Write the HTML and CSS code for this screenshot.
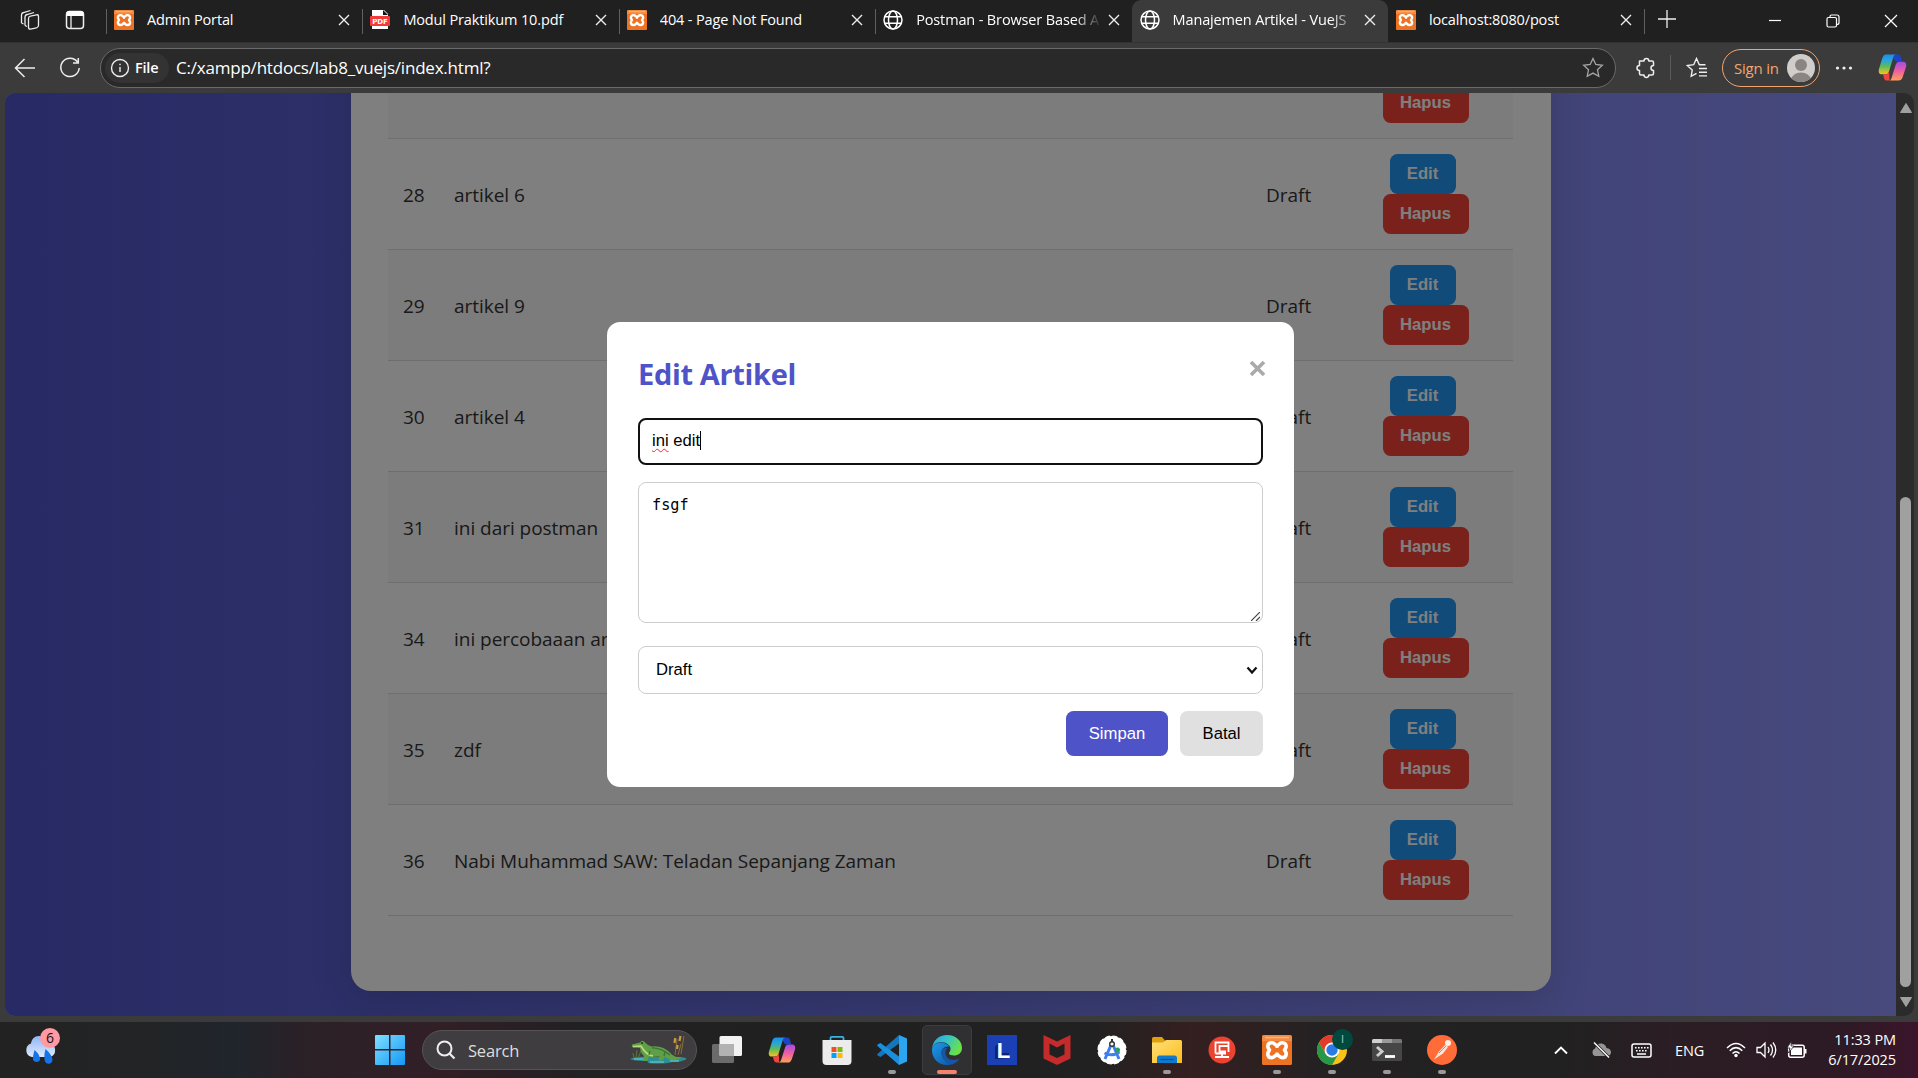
FILE: index.html
```html
<!DOCTYPE html>
<html lang="id">
<head>
<meta charset="utf-8">
<title>Manajemen Artikel - VueJS</title>
<link rel="stylesheet" href="styles.css">
</head>
<body>
<svg class="defs" aria-hidden="true">
  <defs>
    <linearGradient id="cpA" x1="0" y1="0" x2="0" y2="1"><stop offset="0" stop-color="#1b8fe8"/><stop offset=".3" stop-color="#28a5dc"/><stop offset=".6" stop-color="#5cbb5a"/><stop offset="1" stop-color="#f8c51c"/></linearGradient>
    <linearGradient id="cpB" x1="0" y1="0" x2="0" y2="1"><stop offset="0" stop-color="#a04be8"/><stop offset=".5" stop-color="#ee5fa0"/><stop offset="1" stop-color="#ffa058"/></linearGradient>
    <linearGradient id="xg" x1="0" y1="0" x2="0" y2="1"><stop offset="0" stop-color="#f08a3c"/><stop offset=".2" stop-color="#f58a45"/><stop offset=".22" stop-color="#ee7020"/><stop offset="1" stop-color="#ec7424"/></linearGradient>
    <linearGradient id="win" x1="0" y1="0" x2="1" y2="1"><stop offset="0" stop-color="#7fe0ff"/><stop offset="1" stop-color="#1398f5"/></linearGradient>
    <linearGradient id="edA" x1="0" y1="0" x2="1" y2=".4"><stop offset="0" stop-color="#2d9fe0"/><stop offset=".5" stop-color="#34c4c8"/><stop offset="1" stop-color="#6be04a"/></linearGradient>
    <linearGradient id="edB" x1="0" y1="0" x2="1" y2="1"><stop offset="0" stop-color="#1c9ae6"/><stop offset="1" stop-color="#0c4fa0"/></linearGradient>
    <linearGradient id="cl" x1="0" y1="0" x2="0" y2="1"><stop offset="0" stop-color="#8fb6f5"/><stop offset="1" stop-color="#dfeafc"/></linearGradient>
    <linearGradient id="fo" x1="0" y1="0" x2="1" y2="1"><stop offset="0" stop-color="#ffe07a"/><stop offset="1" stop-color="#fbbc1a"/></linearGradient>
  </defs>
  <symbol id="i-xampp" viewBox="0 0 30 30">
    <rect width="30" height="30" rx="1.500" fill="url(#xg)"/><path d="M3 2.500h24" stroke="#f8b68a" stroke-width="1.500"/>
    <path d="M10 7.700c-3 0-4.200 1.600-4.200 3.600 0 1.900 1.200 2.700 1.700 3.700-.5 1-1.700 2-1.700 3.900 0 2 1.300 3.700 4.200 3.700 2.800 0 3-2.700 5-2.700s2.200 2.700 5 2.700c2.900 0 4.200-1.700 4.200-3.700 0-1.900-1.200-2.900-1.700-3.900.5-1 1.700-1.800 1.700-3.700 0-2-1.200-3.600-4.200-3.600-2.800 0-3 2.700-5 2.700s-2.200-2.700-5-2.700z" fill="none" stroke="#fff" stroke-width="3.600" stroke-linejoin="round"/>
    <path d="M15 9.500v3.500M15 17.500v3.500" stroke="#fff" stroke-width="3"/>
  </symbol>
  <symbol id="i-globe" viewBox="0 0 20 20"><g fill="none" stroke="#fff" stroke-width="1.500"><circle cx="10" cy="10" r="9"/><ellipse cx="10" cy="10" rx="4.500" ry="9"/><path d="M1.800 6.800h16.400M1.800 13.200h16.400"/></g></symbol>
  <symbol id="i-x" viewBox="0 0 12 12"><path d="M1 1l10 10M11 1L1 11" stroke="#eee" stroke-width="1.400"/></symbol>
  <symbol id="i-copilot" viewBox="0 0 30 28">
    <path d="M17 .5h3.500c2 0 2.600 1 3.200 3L25 8h-6.500L15 3z" fill="#1b45c8"/>
    <path d="M8.500.5H19c-2 0-2.700 1-3.300 3l-4.200 14c-.8 2.600-1.800 3.500-4.300 3.500H4c-3 0-3.800-2.500-3-5.500L4.200 5C5.200 2 6.300.5 8.500.5z" fill="url(#cpA)"/>
    <path d="M12 27.500H9.500c-2 0-2.800-1-3.400-3l-1-3.500h2.200c2.500 0 3.400-1 4.200-3.500z" fill="#f0443e"/>
    <path d="M21 27.500H10.500c2.300 0 3-1 3.600-3L18.400 11c.6-2 1.700-3 4-3H26c3 0 3.800 2.500 3 5.500l-3 9c-1 3.500-2.300 5-5 5z" fill="url(#cpB)"/>
  </symbol>
</svg>

<header class="tabstrip">
  <div class="strip-tools">
    <svg width="22" height="22" viewBox="0 0 22 22"><g fill="none" stroke="#eee" stroke-width="1.300"><rect x="9.500" y="6.500" width="10" height="13" rx="2" transform="skewY(-12) translate(0 3)"/><path d="M6 16.500V8q0-2 2-2.500l7-2M2.500 14V6q0-2 2-2.500l7-2M6 16.500l2 1M2.500 14l2 1"/></g></svg>
    <svg width="20" height="20" viewBox="0 0 20 20"><rect x="1.500" y="1.500" width="17" height="17" rx="3" fill="none" stroke="#eee" stroke-width="1.500"/><path d="M1.500 6V4q0-3 3-3h11q3 0 3 3v2z" fill="#fff"/><path d="M6 6v12" stroke="#eee" stroke-width="1.300"/></svg>
  </div>
  <div class="tab"><svg class="fav"><use href="#i-xampp"/></svg><span>Admin Portal</span><svg class="x"><use href="#i-x"/></svg></div>
  <div class="tab"><svg class="fav" viewBox="0 0 20 20"><path d="M2 0h12l4 4v15H2z" fill="#fff"/><path d="M13 0l5 5h-5z" fill="#111"/><rect y="6" width="20" height="10" rx="1" fill="#f23c3c"/><text x="10" y="13.800" text-anchor="middle" class="pdf">PDF</text></svg><span>Modul Praktikum 10.pdf</span><svg class="x"><use href="#i-x"/></svg></div>
  <div class="tab"><svg class="fav"><use href="#i-xampp"/></svg><span>404 - Page Not Found</span><svg class="x"><use href="#i-x"/></svg></div>
  <div class="tab"><svg class="fav"><use href="#i-globe"/></svg><span class="fade">Postman - Browser Based A</span><svg class="x"><use href="#i-x"/></svg></div>
  <div class="tab active"><svg class="fav"><use href="#i-globe"/></svg><span class="fade">Manajemen Artikel - VueJS</span><svg class="x"><use href="#i-x"/></svg></div>
  <div class="tab after"><svg class="fav"><use href="#i-xampp"/></svg><span>localhost:8080/post</span><svg class="x"><use href="#i-x"/></svg></div>
  <div class="newtab"><svg width="18" height="18" viewBox="0 0 18 18"><path d="M9 0v18M0 9h18" stroke="#eee" stroke-width="1.300"/></svg></div>
  <div class="winctl">
    <svg width="14" height="14" viewBox="0 0 14 14"><path d="M1 6.500h12" stroke="#fff" stroke-width="1.200"/></svg>
    <svg width="14" height="14" viewBox="0 0 14 14"><g fill="none" stroke="#fff" stroke-width="1.200"><rect x="1" y="3.500" width="9.500" height="9.500" rx="1.500"/><path d="M4 3V2.500Q4 1 5.500 1H11q2 0 2 2v5.500Q13 10.500 11 10.500"/></g></svg>
    <svg width="14" height="14" viewBox="0 0 14 14"><path d="M1 1l12 12M13 1L1 13" stroke="#fff" stroke-width="1.200"/></svg>
  </div>
</header>

<nav class="toolbar">
  <svg class="back" width="22" height="20" viewBox="0 0 22 20"><path d="M21 10H2M10.500 1L1.500 10l9 9" fill="none" stroke="#eee" stroke-width="1.500"/></svg>
  <svg class="reload" width="22" height="22" viewBox="0 0 22 22"><path d="M18.500 5A9.200 9.200 0 1 0 20.200 11M19.300 1v5h-5.300" fill="none" stroke="#eee" stroke-width="1.500"/></svg>
  <div class="address">
    <div class="file"><svg width="20" height="20" viewBox="0 0 20 20"><circle cx="10" cy="10" r="8.500" fill="none" stroke="#eee" stroke-width="1.400"/><path d="M10 9v5M10 5.800v1.500" stroke="#eee" stroke-width="1.400"/></svg><b>File</b></div>
    <span class="url">C:/xampp/htdocs/lab8_vuejs/index.html?</span>
    <svg class="star" width="22" height="22" viewBox="0 0 22 22"><path d="M11 1.500l2.800 6 6.500.8-4.800 4.500 1.300 6.500L11 16.100l-5.800 3.200 1.300-6.500L1.700 8.300l6.500-.8z" fill="none" stroke="#a5a5a5" stroke-width="1.300"/></svg>
  </div>
  <svg class="puzzle" width="22" height="22" viewBox="0 0 22 22"><path d="M5 4h4a2.400 2.400 0 0 1 4.800 0H17q1.500 0 1.500 1.500v3a2.500 2.500 0 1 0 0 5v3q0 1.500-1.500 1.500h-3.200a2.400 2.400 0 0 1-4.800 0H6q-1.500 0-1.500-1.500v-3a2.500 2.500 0 0 1 0-5V4z" fill="none" stroke="#eee" stroke-width="1.500" stroke-linejoin="round"/></svg>
  <i class="tsep"></i>
  <svg class="favs" width="22" height="22" viewBox="0 0 22 22"><path d="M10.500 16.300l-5.300 3 1-6.300-5-4.500 6.500-.8 2.800-6.200 2.800 6.200h6.200M13 11.500h8M13 15.200h8M13 18.900h8" fill="none" stroke="#eee" stroke-width="1.400"/></svg>
  <div class="signin"><span>Sign in</span><svg width="28" height="28" viewBox="0 0 28 28"><clipPath id="av"><circle cx="14" cy="14" r="14"/></clipPath><g clip-path="url(#av)"><rect width="28" height="28" fill="#d0cdca"/><circle cx="14" cy="11" r="6" fill="#8a8583"/><ellipse cx="14" cy="25" rx="9.500" ry="6.500" fill="#8a8583"/></g></svg></div>
  <svg class="dots" width="18" height="6" viewBox="0 0 18 6"><g fill="#eee"><circle cx="2.500" cy="3" r="1.600"/><circle cx="9" cy="3" r="1.600"/><circle cx="15.500" cy="3" r="1.600"/></g></svg>
  <svg class="cop" width="29" height="27"><use href="#i-copilot"/></svg>
</nav>

<main class="frame">
  <div class="page">
    <section class="card">
      <table class="articles">
        <colgroup><col class="c-id"><col><col class="c-st"><col class="c-act"></colgroup>
        <tr><td></td><td></td><td></td><td class="act"><button class="b edit">Edit</button><button class="b del">Hapus</button></td></tr>
        <tr><td>28</td><td>artikel 6</td><td>Draft</td><td class="act"><button class="b edit">Edit</button><button class="b del">Hapus</button></td></tr>
        <tr><td>29</td><td>artikel 9</td><td>Draft</td><td class="act"><button class="b edit">Edit</button><button class="b del">Hapus</button></td></tr>
        <tr><td>30</td><td>artikel 4</td><td>Draft</td><td class="act"><button class="b edit">Edit</button><button class="b del">Hapus</button></td></tr>
        <tr><td>31</td><td>ini dari postman</td><td>Draft</td><td class="act"><button class="b edit">Edit</button><button class="b del">Hapus</button></td></tr>
        <tr><td>34</td><td>ini percobaaan artikel</td><td>Draft</td><td class="act"><button class="b edit">Edit</button><button class="b del">Hapus</button></td></tr>
        <tr><td>35</td><td>zdf</td><td>Draft</td><td class="act"><button class="b edit">Edit</button><button class="b del">Hapus</button></td></tr>
        <tr><td>36</td><td>Nabi Muhammad SAW: Teladan Sepanjang Zaman</td><td>Draft</td><td class="act"><button class="b edit">Edit</button><button class="b del">Hapus</button></td></tr>
      </table>
    </section>
    <div class="overlay">
      <form class="modal">
        <div class="mhead"><h2>Edit Artikel</h2><svg width="17" height="17" viewBox="0 0 17 17"><path d="M2 2l13 13M15 2L2 15" stroke="#aaa" stroke-width="3.600"/></svg></div>
        <div class="field title"><span class="typo">ini</span>&nbsp;edit<i class="caret"></i></div>
        <div class="field body">fsgf<svg class="grip" width="9" height="9" viewBox="0 0 9 9"><path d="M0 9L9 0M5 9l4-4" stroke="#444" stroke-width="1.200"/></svg></div>
        <div class="field status">Draft<svg width="12" height="9" viewBox="0 0 12 9"><path d="M1.500 1.500L6 6.500l4.500-5" fill="none" stroke="#111" stroke-width="2.200"/></svg></div>
        <div class="btns"><button type="button" class="save">Simpan</button><button type="button" class="cancel">Batal</button></div>
      </form>
    </div>
  </div>
  <div class="scroll">
    <svg width="14" height="12" viewBox="0 0 14 12"><path d="M7 1.500L12.500 10.500h-11z" fill="#a0a0a0" stroke="#a0a0a0" stroke-linejoin="round"/></svg>
    <i class="thumb"></i>
    <svg width="14" height="12" viewBox="0 0 14 12"><path d="M7 10.500L12.500 1.500h-11z" fill="#a0a0a0" stroke="#a0a0a0" stroke-linejoin="round"/></svg>
  </div>
</main>

<footer class="taskbar">
  <div class="weather"><svg width="34" height="40" viewBox="0 0 34 40"><path d="M8 27a7 7 0 0 1-1-13.500C8 8 12 5 17 6.500c5 0 8 3 9 7A7 7 0 0 1 26 27z" fill="url(#cl)"/><path d="M10.500 20q6 5 5.500 10a4 4 0 0 1-7 0q-.5-3 1.500-10zM21.500 19q7 6 7 11.500a4 4 0 0 1-7.500 1q-1.500-5 .5-12.500z" fill="#1673ea"/></svg><b>6</b></div>
  <svg class="start" width="30" height="30" viewBox="0 0 30 30"><path d="M0 1q0-1 1-1h13v14H0zM15.500 0H29q1 0 1 1v13H15.500zM0 15.500h14V30H1q-1 0-1-1zM15.500 15.500H30V29q0 1-1 1H15.500z" fill="url(#win)"/></svg>
  <div class="search">
    <svg width="20" height="20" viewBox="0 0 20 20"><circle cx="8.500" cy="8.500" r="7" fill="none" stroke="#eee" stroke-width="2"/><path d="M13.500 13.500l5 5" stroke="#eee" stroke-width="2.200"/></svg>
    <span>Search</span>
    <svg class="croc" width="58" height="30" viewBox="0 0 58 30">
      <path d="M0 24q6-3 16-2h32q10 0 8 2.500-6 3-14 2.500-6 2-20 1.500-6-.5-4-2.500-14 0-18-2z" fill="#2b8f96"/><path d="M4 24h10M20 27h14M40 26h9" stroke="#72d0d6"/>
      <path d="M6 23L7 15M8 23l3-7M4 23l-1-5" stroke="#57713a" stroke-width="1.200"/>
      <path d="M45 20L47 4M51 19L54 1M48 20l3-11" stroke="#8a7038" stroke-width="1"/><path d="M44.500 8l.7-5M49.500 6L50.500 1M47 14l.6-4" stroke="#c79a45" stroke-width="2.200"/>
      <path d="M2 9.500l8-2q2-3 4.500-.5 3 3.500 7 4.500 6-1 12 1.500 5 2.500 9 7 4 3 9 2-4 4-11 3l-6-3-2 3.500h-4l1-4-11 .5-1 4h-4.500l1-5q-3-2-4-8l-7-.5q-2-.5-1-2z" fill="#5f9f48"/>
      <path d="M3 11.500l8-.5q5 9 12 10" stroke="#bcd87c" stroke-width="1.600" fill="none"/><path d="M22 13q8-.5 18 7M19 20l1-4M34 21l1-4" stroke="#3c7437" stroke-width="1.300" fill="none"/><circle cx="12" cy="8" r=".9" fill="#222"/>
    </svg>
  </div>
  <div class="apps">
    <div class="app"><svg viewBox="0 0 30 30"><rect x="0" y="9" width="22" height="19" rx="1.500" fill="#6b6b6b"/><rect x="7.500" y="1" width="22.500" height="20" rx="1.500" fill="#f2f2f2"/><path d="M7.500 9H22v12H7.500z" fill="#b2b2b2"/></svg></div>
    <div class="app"><svg viewBox="0 0 30 30"><use href="#i-copilot" x="1" y="2" width="28" height="26"/></svg></div>
    <div class="app"><svg viewBox="0 0 30 30"><path d="M8.500 7V3q0-1.200 1.200-1.200h10.600q1.200 0 1.200 1.200v4" fill="none" stroke="#35b4e4" stroke-width="1.800"/><path d="M.5 5h29v21q0 4-4 4h-21q-4 0-4-4z" fill="#ececec"/><path d="M9.500 12h5v5h-5z" fill="#f25022"/><path d="M15.500 12h5v5h-5z" fill="#7fba00"/><path d="M9.500 18h5v5h-5z" fill="#00a4ef"/><path d="M15.500 18h5v5h-5z" fill="#ffb900"/></svg></div>
    <div class="app run"><svg viewBox="0 0 30 30"><path d="M22 0l8 3.500v23L22 30z" fill="#2ba5f0"/><path d="M22 0v8.500L3.500 22 1 20.800q-1.500-1 0-2.200z" fill="#1178bd"/><path d="M22 30v-8.500L3.500 8 1 9.200q-1.500 1 0 2.200z" fill="#1b8fdb"/></svg></div>
    <div class="app run cur"><svg viewBox="0 0 30 30"><path d="M0 14C1 5 7 0 15 0c9 0 15 6 15 13 0 5-4 7.500-8 7.500-3 0-5-1-5-2.300 0-1 1.500-1.400 1.500-4.200C18.500 10 14 7 9 7 4 7 1 10 0 14z" fill="url(#edA)"/><path d="M0 14C1 10 4.500 7.500 9 7.500c3 0 7 2 8.500 4-5-.5-8 2.500-8 6.500 0 7 7 10 13 8.500q4-1.500 5-3C25 28 20 30 15 30 6 30-.5 23 0 14z" fill="url(#edB)"/><path d="M10 14c-2 7 2 13 8 15.500 5-1 8-3.500 9.500-6-6 3-14 1.500-14-6 0-2 .8-3.500 2-4.500-2 0-4 .2-5.500 1z" fill="#1556a5"/></svg></div>
    <div class="app"><svg viewBox="0 0 30 30"><path d="M0 0h30v30H0z" fill="#1b3fb4"/><path d="M8 24V12l5-6v12h9v5z" fill="#10246e"/><text x="16.500" y="22.500" text-anchor="middle" class="ell">L</text></svg></div>
    <div class="app"><svg viewBox="0 0 30 30"><path d="M1.500 0L15 6.500 28.500 0v23.500L15 30 1.500 23.500z" fill="#c62b2b"/><path d="M7.500 8.500L15 12.500l7.500-4V19.500L15 23l-7.500-3.500z" fill="#202020"/></svg></div>
    <div class="app"><svg viewBox="0 0 30 30"><circle cx="15" cy="15" r="14" fill="#fff" stroke="#fff" stroke-width="1.200" stroke-dasharray="5 2.330"/><path d="M8 24l6-14h2l6 14M7.500 18q7.500 4 15-1" fill="none" stroke="#3d7fee" stroke-width="3"/><circle cx="20.500" cy="15" r="2.500" fill="#2d9d5a"/><circle cx="15" cy="9" r="2.300" fill="#fff" stroke="#333" stroke-width="1.400"/><path d="M15 4v3" stroke="#333" stroke-width="2"/></svg></div>
    <div class="app run"><svg viewBox="0 0 30 30"><path d="M0 3.500Q0 2 1.500 2H10l3 3.500V9H0z" fill="#dfa010"/><path d="M0 7.500h11L14 5h14.500Q30 5 30 6.500V28H0z" fill="url(#fo)"/><path d="M5 28v-5q0-2.500 2.500-2.500h15Q25 20.500 25 23v5z" fill="#1079ce"/><path d="M8.500 24.500h13" stroke="#0a4f93" stroke-width="1.200"/></svg></div>
    <div class="app"><svg viewBox="0 0 30 30"><circle cx="15" cy="15" r="13.500" fill="#ea4330"/><path d="M8.500 18.500v-11h13v9.500M21 11h-8.500v5.500H19M8.500 18.500H19M15 18.500v3M8 22h14" fill="none" stroke="#fff" stroke-width="1.800"/></svg></div>
    <div class="app run"><svg><use href="#i-xampp"/></svg></div>
    <div class="app run"><svg viewBox="0 0 30 30"><circle cx="15" cy="15" r="15" fill="#fbc116"/><path d="M2 7.500A15 15 0 0 1 28 7.500H15L8.500 18.800z" fill="#e33b2e"/><path d="M2 7.500A15 15 0 0 0 15 30l6.500-11.300-13 0z" fill="#279847"/><circle cx="15" cy="15" r="7.500" fill="#fff"/><circle cx="15" cy="15" r="5.700" fill="#2a7ae8"/></svg><b class="prof">I</b></div>
    <div class="app run"><svg viewBox="0 0 30 30"><rect y="4" width="30" height="22" rx="1.500" fill="#464646"/><path d="M0 8V5.500Q0 4 1.500 4H10v4z" fill="#cfcfcf"/><path d="M10 4h10v4H10z" fill="#9b9b9b"/><path d="M20 4h8.500Q30 4 30 5.500V8H20z" fill="#777"/><path d="M5 12l5 4.500L5 21" fill="none" stroke="#ccc" stroke-width="3"/><path d="M13 21.500h10" stroke="#fff" stroke-width="2.800"/></svg></div>
    <div class="app run"><svg viewBox="0 0 30 30"><circle cx="15" cy="15" r="15" fill="#ff6c37"/><circle cx="21" cy="8" r="3" fill="#fdeee6"/><path d="M18.500 9.500l2.500 2.500-5 6.500-9 6 5-8z" fill="#fbe3d8"/><path d="M12 18l7-7" stroke="#e0683c" stroke-width=".8"/></svg></div>
  </div>
  <div class="tray">
    <svg class="chev" width="14" height="9" viewBox="0 0 14 9"><path d="M1 7.500l6-6 6 6" fill="none" stroke="#fff" stroke-width="1.900"/></svg>
    <svg class="cloud" width="20" height="16" viewBox="0 0 20 16"><path d="M4 14a4 4 0 0 1 0-7.500Q6 1 10.500 1.500q4 .5 5 4.500 4.500.5 4.500 4.500Q19.500 14 16 14z" fill="#969696"/><path d="M3 .5L18 15.500" stroke="#222" stroke-width="3"/><path d="M3 .5L18 15.500" stroke="#fff" stroke-width="1.400"/></svg>
    <svg class="kb" width="21" height="15" viewBox="0 0 21 15"><rect x="1" y="1" width="19" height="13" rx="2" fill="none" stroke="#fff" stroke-width="1.500"/><path d="M4 4.700h14M5 7.700h12" stroke="#fff" stroke-width="1.500" stroke-dasharray="1.600 1.400"/><path d="M6 11h9" stroke="#fff" stroke-width="1.500"/></svg>
    <span class="eng">ENG</span>
    <svg class="wifi" width="20" height="16" viewBox="0 0 20 16"><path d="M1 6q9-9 18 0M3.700 8.800q6.300-6.300 12.600 0M6.500 11.500q3.500-3.500 7 0" fill="none" stroke="#fff" stroke-width="1.500"/><circle cx="10" cy="13.500" r="1.700" fill="#fff"/></svg>
    <svg class="vol" width="21" height="18" viewBox="0 0 21 18"><path d="M1 6.500h3.500L9 2v14l-4.500-4.500H1zM12 6q2 3 0 6M14.500 3.500q4 5.500 0 11M17 1.500q5.500 7.500 0 15" fill="none" stroke="#fff" stroke-width="1.300"/></svg>
    <svg class="bat" width="20" height="18" viewBox="0 0 20 18"><rect x="1.700" y="4.200" width="15.500" height="12" rx="2" fill="none" stroke="#fff" stroke-width="1.500"/><path d="M4 6.500h11v7.500H4z" fill="#fff"/><path d="M18.500 8v4.500" stroke="#fff" stroke-width="2"/><path d="M4.500 0L0 7h3l-1.500 5L7 5H4z" fill="#fff" stroke="#242024" stroke-width=".8"/></svg>
    <div class="clock"><div>11:33 PM</div><div>6/17/2025</div></div>
  </div>
</footer>
</body>
</html>
```

FILE: styles.css
```css
* { box-sizing: border-box; }
body {
  margin: 0;
  width: 1918px;
  height: 1078px;
  overflow: hidden;
  display: flex;
  flex-direction: column;
  background: #3b3b3b;
  font-family: "Open Sans", "Noto Sans", sans-serif;
  color: #fff;
}
svg { display: block; flex: none; }
.defs { position: absolute; width: 0; height: 0; }

/* tab strip */
.tabstrip { height: 42px; flex: none; display: flex; background: #202020; }
.strip-tools { width: 106px; display: flex; align-items: center; gap: 24px; padding: 0 0 2px 19px; }
.tab {
  width: 256.400px;
  height: 42px;
  display: flex;
  align-items: center;
  padding: 0 12px 2px 8px;
  font-size: 14.500px;
  letter-spacing: -.14px;
  background: linear-gradient(#606060, #606060) 0 9px / 1px 25px no-repeat;
}
.tab .fav { width: 20px; height: 20px; }
.tab span { flex: 1; width: 0; margin: 0 6px 0 13px; padding-bottom: 2px; white-space: nowrap; overflow: hidden; }
.tab .x { width: 12px; height: 12px; }
.tab .fade { -webkit-mask-image: linear-gradient(to right, #000 85%, transparent 100%); mask-image: linear-gradient(to right, #000 85%, transparent 100%); }
.tab.active { background: #3b3b3b; border-radius: 9px 9px 0 0; }
.tab.after { background: none; }
.pdf { font: bold 7px "DejaVu Sans", sans-serif; fill: #fff; }
.newtab { width: 44px; padding: 10px 0 0 14px; background: linear-gradient(#606060, #606060) 0 9px / 1px 25px no-repeat; }
.winctl { margin-left: auto; display: flex; gap: 44px; padding: 14px 20px 0 0; }

/* toolbar */
.toolbar { height: 51px; flex: none; display: flex; align-items: center; padding-bottom: 1px; background: #3b3b3b; border-top: 1px solid #333; }
.back { margin-left: 14px; }
.reload { margin: 0 20px 0 23px; }
.address {
  width: 1516px;
  height: 40px;
  margin-left: -1px;
  display: flex;
  align-items: center;
  padding: 0 11px 0 4px;
  border: 1px solid #6a6a6a;
  border-radius: 20px;
  background: #292929;
}
.file { width: 64px; height: 30px; display: flex; align-items: center; gap: 5px; padding-left: 5px; border-radius: 15px; background: #333; font-size: 14.500px; letter-spacing: -.2px; }
.file b { font-weight: 600; }
.url { margin-left: 7px; padding-bottom: 1px; font-size: 17px; letter-spacing: -.21px; }
.star { margin-left: auto; }
.puzzle { margin-left: 19px; }
.tsep { width: 1px; height: 25px; margin: 0 15px 0 13px; background: #5a5a5a; }
.signin { width: 98px; height: 38px; margin-left: 14px; display: flex; align-items: center; justify-content: space-between; padding: 0 4px 0 11px; border: 1.500px solid #f0a46c; border-radius: 19px; color: #f6a56c; font-size: 15px; letter-spacing: -.2px; }
.dots { margin: 0 25px 0 15px; }

/* browser viewport */
.frame { height: 928px; flex: none; display: flex; padding: 0 4px 5px 5px; background: #3b3b3b; }
.page {
  position: relative;
  width: 1891px;
  height: 923px;
  display: flex;
  flex-direction: column;
  justify-content: flex-end;
  align-items: center;
  padding-bottom: 25px;
  overflow: hidden;
  border-radius: 10px 0 0 10px;
  background: linear-gradient(to right, #4e54c8, #8f94fb);
}
.card { width: 1200px; flex: none; padding: 0 37.500px 75px; border-radius: 20px; background: #fff; box-shadow: 0 10px 40px rgba(0, 0, 0, .15); }
.articles { width: 100%; table-layout: fixed; border-collapse: collapse; color: #333; font-size: 19px; letter-spacing: -.03px; }
.c-id { width: 51px; }
.c-st { width: 87px; }
.c-act { width: 175px; }
.articles td { height: 111px; padding: 2px 0 0 15px; border-bottom: 1px solid #ddd; white-space: nowrap; }
.articles tr:nth-child(odd) { background: #f8f8f8; }
.articles .act { padding: 0; }
.b { display: block; height: 40px; margin: 0 auto; border: 0; border-radius: 7.500px; color: #fff; font: bold 16.670px "Liberation Sans", sans-serif; padding: 0; }
.edit { width: 66px; background: #2196f3; transform: translateX(-3px); }
.del { width: 86px; background: #f44336; }
.overlay { position: absolute; inset: 0; display: flex; align-items: center; justify-content: center; background: rgba(0, 0, 0, .5); }

/* edit dialog */
.modal { width: 687px; height: 465px; padding: 31px; border-radius: 13px; background: #fff; color: #000; font: 16.670px "Liberation Sans", sans-serif; }
.mhead { height: 65px; display: flex; justify-content: space-between; padding: 7px 0 0; }
.mhead svg { margin: 0 -3px 0 0; }
h2 { margin: -6px 0 0; font: bold 29px/40px "Open Sans", sans-serif; letter-spacing: -.35px; color: #4e54c8; }
.field { display: flex; align-items: center; border: 1px solid #ccc; border-radius: 8px; }
.title { height: 47px; border: 2px solid #111; padding: 0 0 2px 12px; }
.typo { text-decoration: underline wavy #f22 1px; text-underline-offset: 2px; text-decoration-skip-ink: none; }
.caret { width: 1px; height: 19px; background: #000; }
.body { position: relative; height: 141px; margin: 17px 0 23px; align-items: flex-start; padding: 13px; font: 15.200px "DejaVu Sans Mono", monospace; }
.grip { position: absolute; right: 2px; bottom: 1px; }
.status { height: 48px; justify-content: space-between; padding: 0 4px 0 17px; }
.btns { display: flex; justify-content: flex-end; gap: 12px; margin-top: 17px; }
.btns button { height: 45px; border: 0; border-radius: 7.500px; font: 16.670px "Liberation Sans", sans-serif; padding: 0; }
.save { width: 102px; background: #4e54c8; color: #fff; }
.cancel { width: 83px; background: #e0e0e0; color: #000; }

.scroll { width: 18px; display: flex; flex-direction: column; align-items: center; padding: 9px 0 8px 1px; background: #2b2b2b; border-radius: 0 10px 10px 0; }
.thumb { width: 11px; height: 490px; margin: auto 0 9px; border-radius: 6px; background: #a0a0a0; }

/* taskbar */
.taskbar {
  height: 57px;
  flex: none;
  display: flex;
  align-items: center;
  border-top: 1px solid #3a3a3a;
  background: linear-gradient(to right, #222 0, #222426 150px, #20252c 235px, #2a2127 300px, #321f26 440px, #212022 580px, #212121 1090px, #351f20 1190px, #242122 1320px, #212121 1560px, #2b1d24 1680px, #2d1a24 1840px, #3b152a 1918px);
}
.weather { position: relative; width: 34px; margin-left: 24px; }
.weather b { position: absolute; left: 16px; top: -2px; width: 20px; height: 20px; border-radius: 50%; background: #ff99a4; color: #111; font: 14px/20px "Open Sans", sans-serif; text-align: center; }
.start { margin-left: 317px; }
.search { width: 275px; height: 40px; margin-left: 17px; display: flex; align-items: center; padding: 0 8px 0 13px; border: 1px solid #555355; border-radius: 20px; background: #403d40; color: #ddd; font-size: 16.500px; letter-spacing: -.2px; }
.search span { margin-left: 12px; }
.croc { margin-left: auto; }
.apps { display: flex; margin-left: 5px; }
.app { position: relative; width: 50px; height: 50px; margin-right: 5px; padding: 10px; border-radius: 5px; }
.app svg { width: 30px; height: 30px; }
.run::after { content: ""; position: absolute; left: 21px; bottom: 1px; width: 8px; height: 4px; border-radius: 2px; background: #999; }
.cur { background: #303032; border: 1px solid #3c3c3e; padding: 9px; }
.cur::after { left: 14px; bottom: 0; width: 20px; background: #f5826a; }
.prof { position: absolute; left: 25px; top: 4px; width: 21px; height: 21px; border-radius: 50%; background: #00493f; color: #9fc0ba; font: 11px/21px "Liberation Sans", sans-serif; text-align: center; }
.ell { font: bold 22px "Liberation Sans", sans-serif; fill: #fff; }
.tray { display: flex; align-items: center; margin-left: auto; padding-right: 22px; font-size: 14.500px; letter-spacing: -.1px; }
.cloud { margin-left: 23px; }
.kb { margin-left: 20px; }
.eng { margin-left: 23px; width: 29px; }
.wifi { margin-left: 22px; }
.vol { margin-left: 10px; }
.bat { margin-left: 10px; }
.clock { width: 89px; text-align: right; line-height: 20px; }
```
